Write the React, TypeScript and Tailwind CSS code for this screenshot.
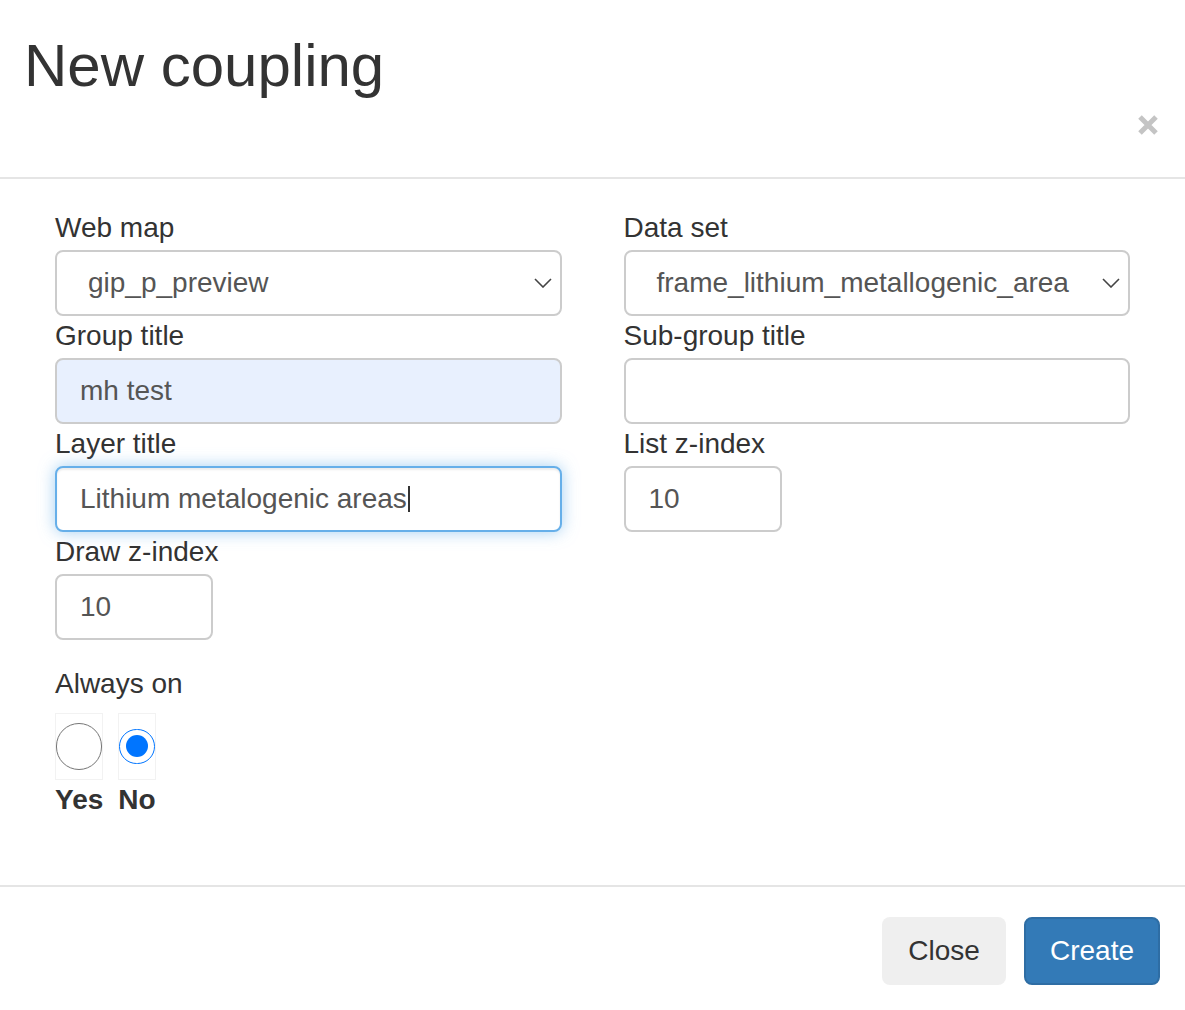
import React from 'react';

const Field: React.FC<{ label: string; children: React.ReactNode }> = ({ label, children }) => (
    <div className="flex flex-col">
        <label className="text-[28px] leading-[40px] mb-[2px] text-[#333]">{label}</label>
        {children}
    </div>
);

const Chevron = () => (
    <svg width="18" height="10" viewBox="0 0 18 10" className="shrink-0">
        <polyline points="1,1 9,9 17,1" fill="none" stroke="#444" strokeWidth="1.6" />
    </svg>
);

const SelectBox: React.FC<{ value: string }> = ({ value }) => (
    <div className="h-[66px] border-2 border-[#cccccc] rounded-[8px] bg-white flex items-center pl-[31px] pr-[8px] text-[28px] text-[#555]">
        <span className="flex-1 whitespace-nowrap">{value}</span>
        <Chevron />
    </div>
);

const TextBox: React.FC<{ value?: string; className?: string; children?: React.ReactNode }> = ({
    value,
    className = '',
    children,
}) => (
    <div
        className={`h-[66px] border-2 rounded-[8px] flex items-center px-[23px] text-[28px] text-[#555] ${className}`}
    >
        {value}
        {children}
    </div>
);

export default function App() {
    return (
        <div className="min-h-screen bg-white text-[#333] font-['Liberation_Sans',Arial,sans-serif]">
            {/* Header */}
            <header className="border-b-2 border-[#e5e5e5] pl-[24px] pr-[27px] pt-[33px] pb-[42px]">
                <h1 className="text-[60px] leading-[66px] font-normal text-[#333]">New coupling</h1>
                <div className="flex justify-end mt-[16px]">
                    <svg width="20" height="20" viewBox="0 0 20 20">
                        <path d="M2 2 L18 18 M18 2 L2 18" stroke="#c4c4c4" strokeWidth="5" />
                    </svg>
                </div>
            </header>

            {/* Body */}
            <div className="px-[55px] pt-[29px] pb-[65px]">
                <div className="grid grid-cols-2 gap-x-[62px]">
                    <Field label="Web map">
                        <SelectBox value="gip_p_preview" />
                    </Field>
                    <Field label="Data set">
                        <SelectBox value="frame_lithium_metallogenic_area" />
                    </Field>
                    <Field label="Group title">
                        <TextBox value="mh test" className="border-[#cccccc] bg-[#e8f0fe]" />
                    </Field>
                    <Field label="Sub-group title">
                        <TextBox className="border-[#cccccc] bg-white" />
                    </Field>
                    <Field label="Layer title">
                        <TextBox
                            value="Lithium metalogenic areas"
                            className="border-[#66afe9] bg-white shadow-[inset_0_2px_2px_rgba(0,0,0,0.075),0_0_16px_rgba(102,175,233,0.6)]"
                        >
                            <span className="inline-block w-[2px] h-[26px] bg-[#333] ml-[1px]" />
                        </TextBox>
                    </Field>
                    <Field label="List z-index">
                        <TextBox value="10" className="w-[158px] border-[#cccccc] bg-white" />
                    </Field>
                    <Field label="Draw z-index">
                        <TextBox value="10" className="w-[158px] border-[#cccccc] bg-white" />
                    </Field>
                </div>

                {/* Always on */}
                <div className="mt-[24px]">
                    <div className="text-[28px] leading-[40px] mb-[9px]">Always on</div>
                    <div className="flex gap-[15px]">
                        <div className="flex flex-col">
                            <div className="h-[67px] border border-[#f2f2f2] flex items-center">
                                <div className="w-full aspect-square rounded-full border-[1.5px] border-[#767676] bg-white" />
                            </div>
                            <span className="text-[28px] leading-[40px] font-bold">Yes</span>
                        </div>
                        <div className="flex flex-col">
                            <div className="h-[67px] border border-[#f2f2f2] flex items-center">
                                <div className="w-full aspect-square rounded-full border-[1.5px] border-[#0075ff] bg-white flex items-center justify-center">
                                    <div className="w-[22px] h-[22px] rounded-full bg-[#0075ff]" />
                                </div>
                            </div>
                            <span className="text-[28px] leading-[40px] font-bold">No</span>
                        </div>
                    </div>
                </div>
            </div>

            {/* Footer */}
            <footer className="border-t-2 border-[#e5e5e5] flex justify-end gap-[18px] pt-[30px] pr-[25px]">
                <button className="h-[68px] px-[26px] rounded-[8px] bg-[#efefef] text-[#333] text-[28px]">
                    Close
                </button>
                <button className="h-[68px] px-[24px] rounded-[8px] bg-[#337ab7] border-2 border-[#2e6da4] text-white text-[28px]">
                    Create
                </button>
            </footer>
        </div>
    );
}
